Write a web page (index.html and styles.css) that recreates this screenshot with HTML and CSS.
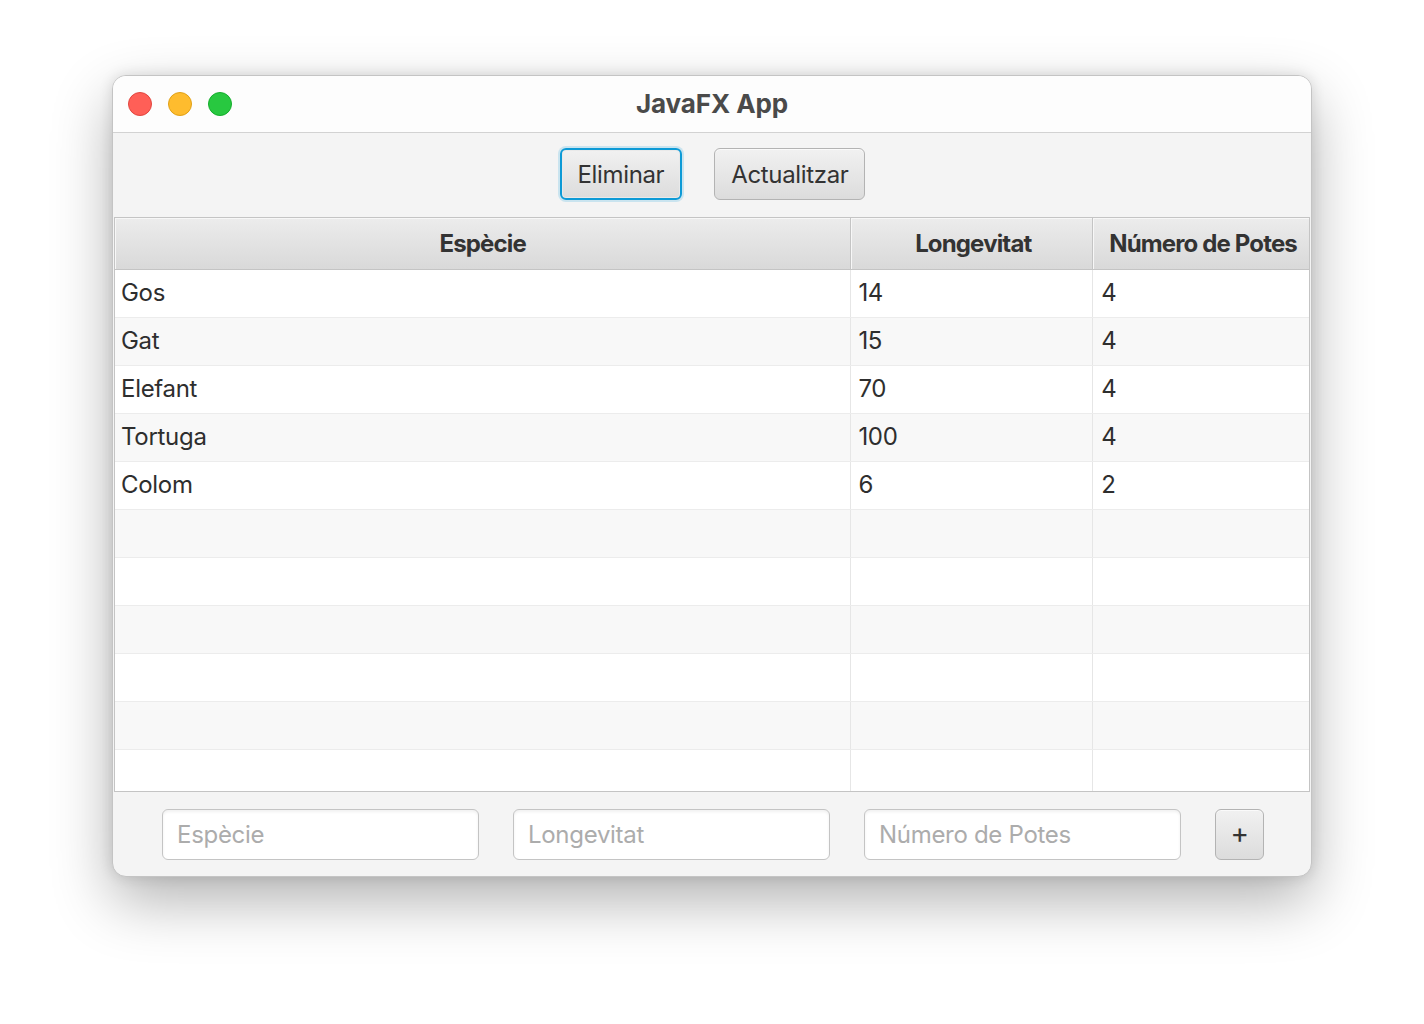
FILE: index.html
```html
<!DOCTYPE html>
<html>
<head>
<meta charset="utf-8">
<link rel="stylesheet" href="styles.css">
</head>
<body>
<div class="window">
  <div class="titlebar">
    <div class="lights">
      <span class="light red"></span>
      <span class="light yellow"></span>
      <span class="light green"></span>
    </div>
    <div class="title">JavaFX App</div>
  </div>
  <div class="toolbar">
    <button class="btn focused">Eliminar</button>
    <button class="btn">Actualitzar</button>
  </div>
  <div class="table">
    <div class="row header">
      <div class="cell c1">Espècie</div>
      <div class="cell c2">Longevitat</div>
      <div class="cell c3">Número de Potes</div>
    </div>
    <div class="body">
      <div class="row"><div class="cell c1">Gos</div><div class="cell c2">14</div><div class="cell c3">4</div></div>
      <div class="row"><div class="cell c1">Gat</div><div class="cell c2">15</div><div class="cell c3">4</div></div>
      <div class="row"><div class="cell c1">Elefant</div><div class="cell c2">70</div><div class="cell c3">4</div></div>
      <div class="row"><div class="cell c1">Tortuga</div><div class="cell c2">100</div><div class="cell c3">4</div></div>
      <div class="row"><div class="cell c1">Colom</div><div class="cell c2">6</div><div class="cell c3">2</div></div>
      <div class="row"><div class="cell c1"></div><div class="cell c2"></div><div class="cell c3"></div></div>
      <div class="row"><div class="cell c1"></div><div class="cell c2"></div><div class="cell c3"></div></div>
      <div class="row"><div class="cell c1"></div><div class="cell c2"></div><div class="cell c3"></div></div>
      <div class="row"><div class="cell c1"></div><div class="cell c2"></div><div class="cell c3"></div></div>
      <div class="row"><div class="cell c1"></div><div class="cell c2"></div><div class="cell c3"></div></div>
      <div class="row"><div class="cell c1"></div><div class="cell c2"></div><div class="cell c3"></div></div>
    </div>
  </div>
  <div class="bottombar">
    <input class="field" placeholder="Espècie">
    <input class="field" placeholder="Longevitat">
    <input class="field" placeholder="Número de Potes">
    <button class="btn plus">+</button>
  </div>
</div>
</body>
</html>
```

FILE: styles.css
```css
* { box-sizing: border-box; }
html, body { margin: 0; padding: 0; background: #ffffff; }
body {
  width: 1424px;
  height: 1024px;
  overflow: hidden;
  font-family: Inter, "Noto Sans", sans-serif;
  color: #2e2e2e;
}
.window {
  margin: 75px 0 0 112px;
  width: 1200px;
  height: 802px;
  border: 1px solid #c4c4c4;
  border-radius: 14px;
  overflow: hidden;
  background: #f4f4f4;
  box-shadow: 0 24px 60px rgba(0,0,0,0.30), 0 0 14px rgba(0,0,0,0.12);
  display: flex;
  flex-direction: column;
}
.titlebar {
  height: 57px;
  flex: none;
  background: #fdfdfd;
  border-bottom: 1px solid #d2d2d2;
  display: flex;
  align-items: center;
  position: relative;
}
.lights {
  display: flex;
  gap: 16px;
  padding-left: 15px;
}
.light {
  width: 24px;
  height: 24px;
  border-radius: 50%;
  display: block;
}
.red { background: #ff5f57; border: 1px solid #e2463f; }
.yellow { background: #febc2e; border: 1px solid #e1a116; }
.green { background: #28c840; border: 1px solid #14ae2c; }
.title {
  position: absolute;
  left: 0;
  right: 0;
  top: 0;
  bottom: 0;
  display: flex;
  align-items: center;
  justify-content: center;
  font-weight: 700;
  font-size: 26px;
  color: #4a4a4a;
  padding-bottom: 2px;
  letter-spacing: -0.1px;
}
.toolbar {
  height: 84px;
  flex: none;
  display: flex;
  align-items: flex-start;
  justify-content: center;
  gap: 32px;
  padding-top: 15px;
  padding-left: 1px;
}
.btn {
  font-family: Inter, "Noto Sans", sans-serif;
  font-size: 24px;
  letter-spacing: -0.35px;
  color: #333;
  height: 52px;
  padding: 0 16px;
  border: 1px solid #b3b3b3;
  border-radius: 6px;
  background: linear-gradient(#f1f1f1, #dcdcdc);
  box-shadow: inset 0 1px 0 #fafafa;
}
.btn.focused {
  border: 2px solid #0d9ad6;
  box-shadow: 0 0 0 2px rgba(13,154,214,0.18), inset 0 0 0 1px #e9e9e9;
  padding: 0 16px;
}
.table {
  flex: none;
  height: 575px;
  margin: 0 1px;
  border: 1px solid #c4c4c4;
  background: #fff;
  overflow: hidden;
  display: flex;
  flex-direction: column;
}
.row {
  display: flex;
  height: 48px;
  flex: none;
  border-bottom: 1px solid #ececec;
  background: #fff;
}
.body .row:nth-child(even) { background: #f8f8f8; }
.cell {
  height: 100%;
  display: flex;
  align-items: center;
  padding-left: 6px;
  padding-bottom: 2px;
  font-size: 24px;
  letter-spacing: -0.3px;
  color: #2e2e2e;
  border-right: 1px solid #e6e6e6;
}
.c1 { width: 737px; }
.c2 { width: 242px; padding-left: 7px; }
.c3 { width: 216px; border-right: none; padding-left: 8px; }
.row.header {
  height: 52px;
  border-bottom: 1px solid #c4c4c4;
  background: #f4f4f4;
}
.header .cell {
  justify-content: center;
  padding-left: 0;
  padding-bottom: 0;
  font-weight: 700;
  color: #333;
  letter-spacing: -0.85px;
  background: linear-gradient(#ececec, #d9d9d9);
  border-right: 1px solid #c4c4c4;
  box-shadow: inset 1px 1px 0 #f7f7f7;
}
.header .c2 { padding-left: 3px; }
.header .c3 { border-right: none; padding-left: 4px; }
.body { flex: 1; overflow: hidden; }
.bottombar {
  flex: 1;
  display: flex;
  align-items: center;
  gap: 34px;
  padding-left: 49px;
}
.field {
  width: 317px;
  height: 51px;
  border: 1px solid #c4c4c4;
  border-radius: 6px;
  background: #fff;
  box-shadow: inset 0 2px 3px rgba(0,0,0,0.06);
  font-family: Inter, "Noto Sans", sans-serif;
  font-size: 24px;
  letter-spacing: -0.3px;
  padding: 0 14px;
  outline: none;
}
.field::placeholder { color: #acacac; }
.btn.plus {
  width: 49px;
  height: 51px;
  padding: 0 0 2px 0;
  font-size: 28px;
  font-weight: 400;
  color: #333;
  line-height: 1;
}
```
